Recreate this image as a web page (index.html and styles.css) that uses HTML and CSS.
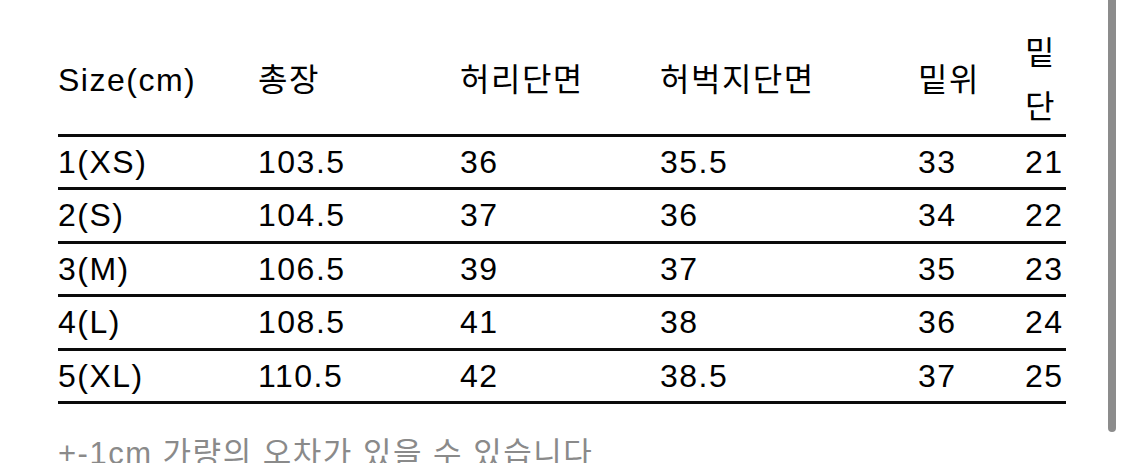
FILE: index.html
```html
<!DOCTYPE html>
<html lang="ko">
<head>
<meta charset="utf-8">
<title>Size chart</title>
<link rel="stylesheet" href="styles.css">
</head>
<body>
<div class="page">
  <table class="size-table">
    <colgroup>
      <col class="c1"><col class="c2"><col class="c3"><col class="c4"><col class="c5"><col class="c6">
    </colgroup>
    <thead>
      <tr><th>Size(cm)</th><th>총장</th><th>허리단면</th><th>허벅지단면</th><th>밑위</th><th>밑단</th></tr>
    </thead>
    <tbody>
      <tr><td>1(XS)</td><td>103.5</td><td>36</td><td>35.5</td><td>33</td><td>21</td></tr>
      <tr><td>2(S)</td><td>104.5</td><td>37</td><td>36</td><td>34</td><td>22</td></tr>
      <tr><td>3(M)</td><td>106.5</td><td>39</td><td>37</td><td>35</td><td>23</td></tr>
      <tr><td>4(L)</td><td>108.5</td><td>41</td><td>38</td><td>36</td><td>24</td></tr>
      <tr><td>5(XL)</td><td>110.5</td><td>42</td><td>38.5</td><td>37</td><td>25</td></tr>
    </tbody>
  </table>
  <p class="note">+-1cm 가량의 오차가 있을 수 있습니다</p>
  <div class="scrollbar"></div>
</div>
</body>
</html>
```
FILE: styles.css
```css
html, body {
  margin: 0;
  padding: 0;
  background: #fff;
  overflow: hidden;
}
.page {
  position: relative;
  width: 1125px;
  height: 463px;
  padding: 26px 0 0 58px;
  box-sizing: border-box;
  font-family: "Liberation Sans", "Noto Sans CJK KR", sans-serif;
  color: #000;
}
.size-table {
  width: 1008px;
  table-layout: fixed;
  border-collapse: collapse;
  font-size: 32px;
  letter-spacing: 1.5px;
}
.c1 { width: 200px; }
.c2 { width: 202px; }
.c3 { width: 200px; }
.c4 { width: 258px; }
.c5 { width: 107px; }
.c6 { width: 41px; }
.size-table th,
.size-table td {
  padding: 0;
  text-align: left;
  font-weight: normal;
  vertical-align: middle;
}
.size-table th {
  line-height: 54px;
  border-bottom: 3px solid #0a0a0a;
}
.size-table td {
  line-height: 50.4px;
  border-bottom: 3px solid #0a0a0a;
}
.note {
  margin: 32px 0 0;
  font-size: 31px;
  line-height: 36px;
  letter-spacing: 1.5px;
  color: #8a8a8a;
  white-space: nowrap;
}
.scrollbar {
  position: absolute;
  left: 1108px;
  top: -6px;
  width: 8px;
  height: 438px;
  border-radius: 4px;
  background: #8c8c8c;
}
```
